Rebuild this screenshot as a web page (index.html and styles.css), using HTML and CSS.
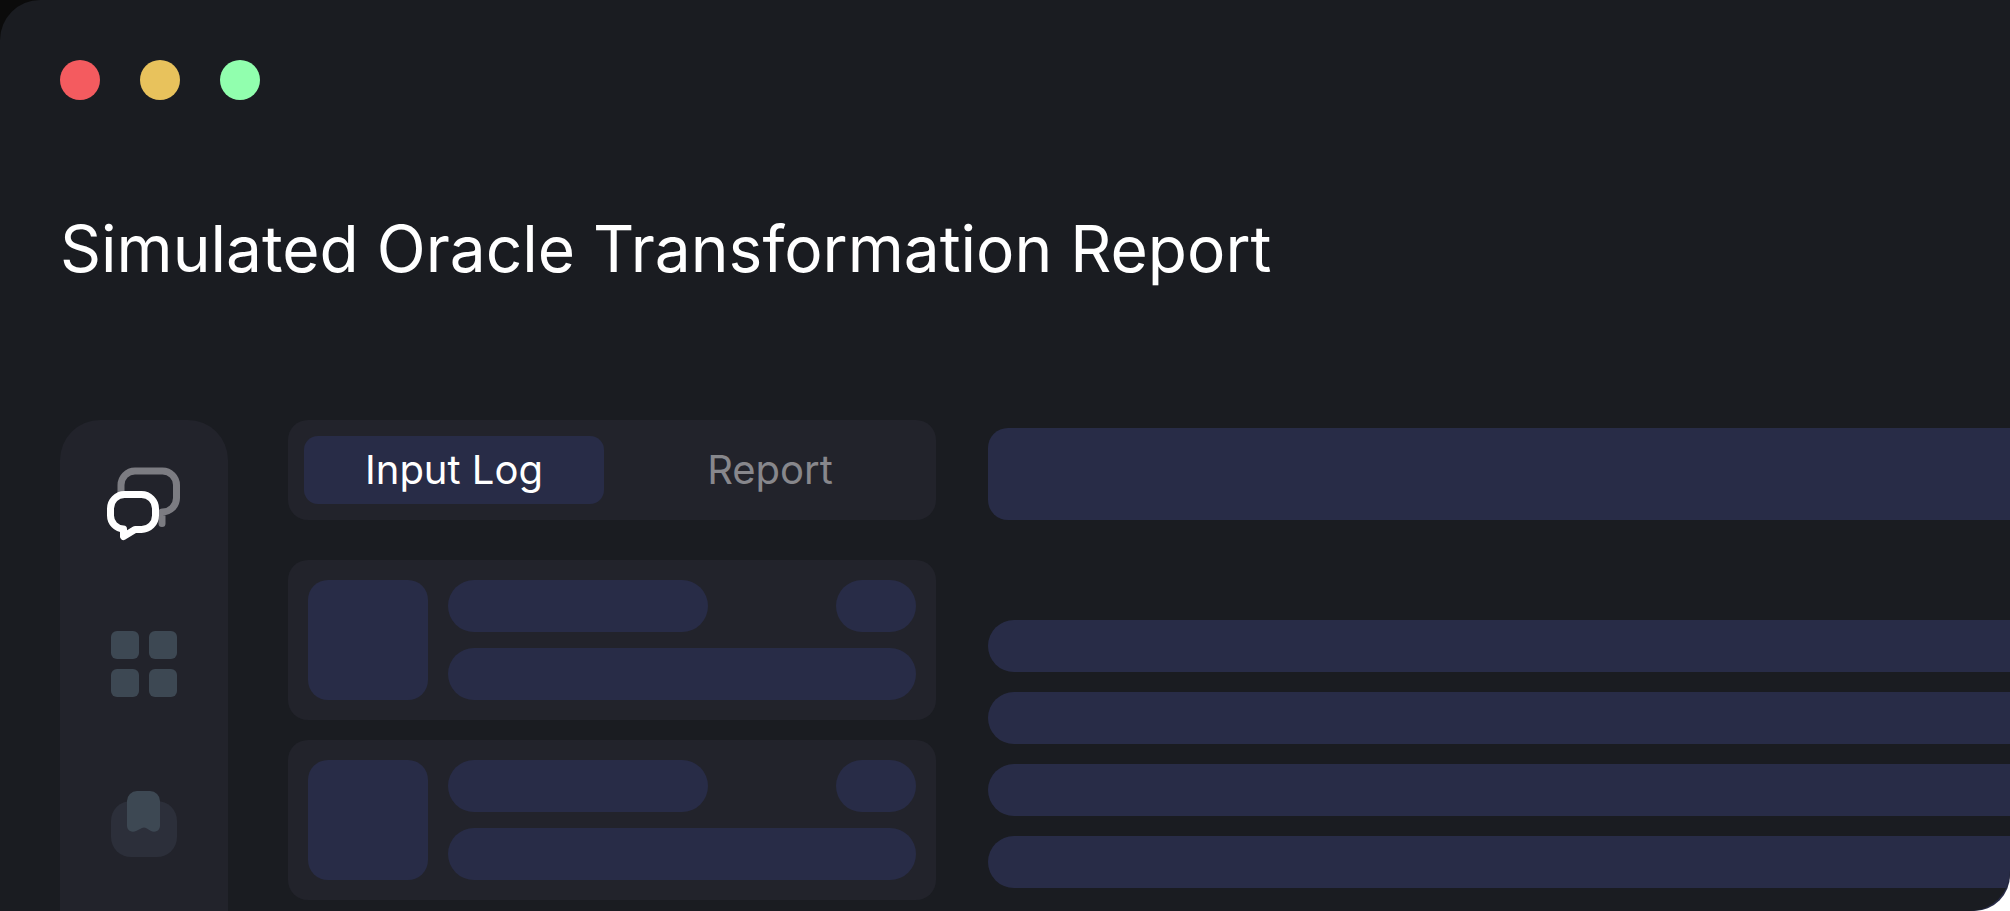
FILE: index.html
```html
<!DOCTYPE html>
<html lang="en">
<head>
  <meta charset="UTF-8">
  <meta name="viewport" content="width=device-width, initial-scale=1.0">
  <title>Simulated Oracle Transformation Report</title>
  <link rel="stylesheet" href="styles.css">
</head>
<body>

  <div class="frame">
    <div class="window">
      <div class="dots">
        <span class="dot dot-red"></span>
        <span class="dot dot-yellow"></span>
        <span class="dot dot-green"></span>
      </div>

      <h1 class="title">Simulated Oracle Transformation Report</h1>

      <div class="workspace">
        <nav class="sidebar">
          <svg class="icon-chat" width="90" height="90" viewBox="0 0 90 90" fill="none" stroke-linecap="round" stroke-linejoin="round">
            <path d="M22 38V25a14 14 0 0 1 14-14H63.5a14 14 0 0 1 14 14V38a14 14 0 0 1-14 14H63V63.5" stroke="#7c7c82" stroke-width="7"/>
            <path d="M25.5 34.5H42.5a14 14 0 0 1 14 14V55.5a14 14 0 0 1-14 14H36L24.5 76.5V69A13.5 13.5 0 0 1 11.5 55.5V48.5a14 14 0 0 1 14-14Z" fill="#22232b" stroke="#fff" stroke-width="7"/>
          </svg>

          <div class="icon-grid">
            <span></span>
            <span></span>
            <span></span>
            <span></span>
          </div>

          <svg class="icon-saved" width="66" height="66" viewBox="0 0 66 66">
            <rect y="10" width="66" height="56" rx="20" fill="#2c2f3a"/>
            <path d="M26 0H39a10 10 0 0 1 10 10V35a6 6 0 0 1-9 5L35 37a4 4 0 0 0-4 0L25 40a6 6 0 0 1-9-5V10a10 10 0 0 1 10-10Z" fill="#3d4853"/>
          </svg>
        </nav>

        <section class="log-column">
          <div class="tabs">
            <div class="tab tab-active">Input Log</div>
            <div class="tab">Report</div>
          </div>

          <div class="log-list">
            <div class="log-card">
              <div class="thumb"></div>
              <div class="log-lines">
                <div class="log-top">
                  <div class="bar bar-name"></div>
                  <div class="bar bar-tag"></div>
                </div>
                <div class="bar"></div>
              </div>
            </div>

            <div class="log-card">
              <div class="thumb"></div>
              <div class="log-lines">
                <div class="log-top">
                  <div class="bar bar-name"></div>
                  <div class="bar bar-tag"></div>
                </div>
                <div class="bar"></div>
              </div>
            </div>
          </div>
        </section>

        <section class="report-column">
          <div class="report-head"></div>
          <div class="report-rows">
            <div class="bar"></div>
            <div class="bar"></div>
            <div class="bar"></div>
            <div class="bar"></div>
          </div>
        </section>
      </div>
    </div>
  </div>

</body>
</html>
```
FILE: styles.css
```css
html, body {
  height: 100%;
}

body {
  margin: 0;
  background-color: #fff;
  font-family: 'Inter', 'Liberation Sans', sans-serif;
  overflow: hidden;
}

.frame {
  height: 911px;
  background: linear-gradient(135deg, #0b0b0b 50%, #282c47 50%);
  border-radius: 0 0 36px 0;
}

.window {
  box-sizing: border-box;
  height: 911px;
  padding: 60px 0 0 60px;
  background-color: #1a1c21;
  border-radius: 40px 0 40px 0;
  overflow: hidden;
}

/* window buttons */
.dots {
  display: flex;
  gap: 40px;
}

.dot {
  width: 40px;
  height: 40px;
  border-radius: 50%;
}

.dot-red {
  background-color: #f45b5f;
}

.dot-yellow {
  background-color: #e8c25c;
}

.dot-green {
  background-color: #91ffae;
}

.title {
  margin: 109px 0 131px 0;
  color: #fff;
  font-size: 64px;
  font-weight: 400;
  line-height: 80px;
}

.workspace {
  display: flex;
  align-items: flex-start;
}

.sidebar {
  box-sizing: border-box;
  display: flex;
  flex-direction: column;
  align-items: center;
  flex-shrink: 0;
  width: 168px;
  height: 620px;
  padding-top: 40px;
  background-color: #22232b;
  border-radius: 40px;
}

.icon-grid {
  display: grid;
  grid-template-columns: 28px 28px;
  gap: 10px;
  margin-top: 81px;
}

.icon-grid span {
  height: 28px;
  background-color: #3d4853;
  border-radius: 6px;
}

.icon-saved {
  margin-top: 94px;
}

.log-column {
  flex-shrink: 0;
  width: 648px;
  margin-left: 60px;
}

.tabs {
  display: flex;
  gap: 16px;
  padding: 16px;
  background-color: #22232b;
  border-radius: 20px;
}

.tab {
  width: 300px;
  height: 68px;
  color: #87878c;
  font-size: 40px;
  line-height: 68px;
  text-align: center;
  border-radius: 14px;
}

.tab-active {
  color: #fff;
  background-color: #282c47;
}

.log-list {
  display: flex;
  flex-direction: column;
  gap: 20px;
  margin-top: 40px;
}

.log-card {
  display: flex;
  gap: 20px;
  padding: 20px;
  background-color: #22232b;
  border-radius: 20px;
}

.thumb {
  flex-shrink: 0;
  width: 120px;
  height: 120px;
  background-color: #282c47;
  border-radius: 20px;
}

.log-lines {
  display: flex;
  flex-direction: column;
  flex: 1;
  gap: 16px;
}

.log-top {
  display: flex;
  justify-content: space-between;
}

.bar {
  height: 52px;
  background-color: #282c47;
  border-radius: 26px;
}

.bar-name {
  width: 260px;
}

.bar-tag {
  width: 80px;
}

.report-column {
  flex: 1;
  margin-top: 8px;
  margin-left: 52px;
}

.report-head {
  height: 92px;
  background-color: #282c47;
  border-radius: 20px 0 0 20px;
}

.report-rows {
  display: flex;
  flex-direction: column;
  gap: 20px;
  margin-top: 100px;
}

.report-rows .bar {
  border-radius: 26px 0 0 26px;
}
```
